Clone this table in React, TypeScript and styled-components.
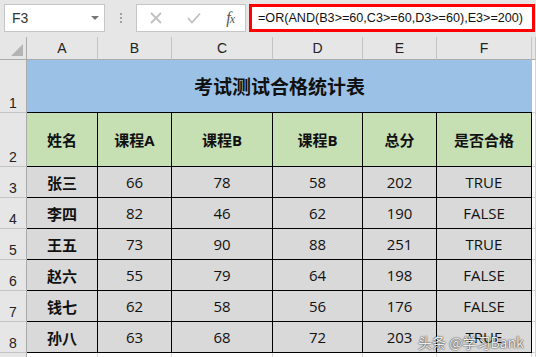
import React from 'react'
import styled, { createGlobalStyle } from 'styled-components'

const CJK = '"Open Sans", "Noto Sans CJK SC", sans-serif'

const GlobalStyle = createGlobalStyle`
  html, body {
    margin: 0;
    padding: 0;
    background: #e6e6e6;
  }
  * {
    box-sizing: border-box;
  }
`

const headers = ['姓名', '课程A', '课程B', '课程B', '总分', '是否合格']
const columns = ['A', 'B', 'C', 'D', 'E', 'F']

const rows = [
  ['张三', 66, 78, 58, 202, 'TRUE'],
  ['李四', 82, 46, 62, 190, 'FALSE'],
  ['王五', 73, 90, 88, 251, 'TRUE'],
  ['赵六', 55, 79, 64, 198, 'FALSE'],
  ['钱七', 62, 58, 56, 176, 'FALSE'],
  ['孙八', 63, 68, 72, 203, 'TRUE'],
]

export default function App() {
  return (
    <Page>
      <GlobalStyle />
      <Toolbar>
        <NameBox>
          F3
          <Caret />
        </NameBox>
        <Grip>
          <i />
          <i />
          <i />
        </Grip>
        <FnBox>
          <FnIcon viewBox="0 0 12 12">
            <path d="M1 1 L11 11 M11 1 L1 11" />
          </FnIcon>
          <FnIcon viewBox="0 0 14 12" $wide>
            <path d="M1 6 L5 10.5 L13 1.5" />
          </FnIcon>
          <Fx>
            f<small>x</small>
          </Fx>
        </FnBox>
        <FormulaBox>=OR(AND(B3&gt;=60,C3&gt;=60,D3&gt;=60),E3&gt;=200)</FormulaBox>
      </Toolbar>

      <Sheet>
        <Corner>
          <CornerMark />
        </Corner>
        {columns.map((c) => (
          <ColHead key={c}>{c}</ColHead>
        ))}
        <ColHead />

        <RowHead>1</RowHead>
        <TitleCell>考试测试合格统计表</TitleCell>
        <Spare />

        <RowHead>2</RowHead>
        {headers.map((h, i) => (
          <HeadCell key={i}>{h}</HeadCell>
        ))}
        <Spare />

        {rows.map((r, ri) => (
          <React.Fragment key={ri}>
            <RowHead>{ri + 3}</RowHead>
            {r.map((v, ci) => (
              <DataCell key={ci} $bold={ci === 0}>
                {v}
              </DataCell>
            ))}
            <Spare />
          </React.Fragment>
        ))}

        <RowHead $open />
        {columns.map((c) => (
          <Spare key={c} $open />
        ))}
        <Spare $open />
      </Sheet>

      {/* watermark sits over the last row, as in the screenshot */}
      <Watermark>头条 @学习Bank</Watermark>
    </Page>
  )
}

const Page = styled.div`
  position: relative;
  width: 536px;
  height: 357px;
  overflow: hidden;
  background: #e6e6e6;
  font-family: "Liberation Sans", Arial, sans-serif;
`

const Toolbar = styled.div`
  display: flex;
  align-items: flex-start;
  height: 37px;
  padding: 4px 1px 0 4px;
  background: #e6e6e6;
`

const NameBox = styled.div`
  position: relative;
  display: flex;
  align-items: center;
  width: 101px;
  height: 28px;
  padding-left: 7px;
  background: #fff;
  border: 1px solid #c6c6c6;
  font-size: 14px;
  color: #333;
`

const Caret = styled.span`
  position: absolute;
  right: 5px;
  top: 11px;
  border-left: 4px solid transparent;
  border-right: 4px solid transparent;
  border-top: 4px solid #777;
`

const Grip = styled.div`
  display: flex;
  flex-direction: column;
  gap: 2px;
  width: 31px;
  padding: 9px 0 0 15px;

  i {
    display: block;
    width: 2px;
    height: 2px;
    background: #a0a0a0;
  }
`

const FnBox = styled.div`
  display: flex;
  align-items: center;
  justify-content: space-between;
  width: 110px;
  height: 28px;
  padding: 0 11px 0 13px;
  background: #fff;
  border: 1px solid #c6c6c6;
`

const FnIcon = styled.svg<{ $wide?: boolean }>`
  width: ${(p) => (p.$wide ? 14 : 12)}px;
  height: 12px;
  fill: none;
  stroke: #c0c0c0;
  stroke-width: 1.8;
`

const Fx = styled.span`
  font-family: "Liberation Serif", serif;
  font-style: italic;
  font-size: 16px;
  color: #555;
  letter-spacing: -1px;

  small {
    font-size: 12px;
  }
`

const FormulaBox = styled.div`
  display: flex;
  align-items: center;
  flex: 1;
  height: 28px;
  margin-left: 3px;
  padding-left: 6px;
  background: #fff;
  border: 3px solid #ff0000;
  font-size: 12.6px;
  color: #111;
  white-space: nowrap;
`

const Sheet = styled.div`
  display: grid;
  grid-template-columns: 27px 71px 74px 101px 90px 74px 95px 1fr;
  grid-template-rows: 23px 53px 54px repeat(6, 31px) 1fr;
  height: 320px;
  background: #fff;
`

const Corner = styled.div`
  position: relative;
  background: #e6e6e6;
  border-right: 1px solid #ababab;
  border-bottom: 1px solid #ababab;
`

const CornerMark = styled.span`
  position: absolute;
  right: 3px;
  bottom: 3px;
  border-left: 12px solid transparent;
  border-bottom: 12px solid #b4b4b4;
`

const ColHead = styled.div`
  display: flex;
  align-items: center;
  justify-content: center;
  background: #e6e6e6;
  border-right: 1px solid #c4c4c4;
  border-bottom: 1px solid #ababab;
  font-size: 14px;
  color: #222;
`

const RowHead = styled.div<{ $open?: boolean }>`
  display: flex;
  align-items: flex-end;
  justify-content: center;
  padding-bottom: 1px;
  background: #e6e6e6;
  border-right: 1px solid #ababab;
  border-bottom: ${(p) => (p.$open ? 'none' : '1px solid #c4c4c4')};
  font-size: 14px;
  line-height: 15px;
  color: #222;
`

const TitleCell = styled.div`
  grid-column: span 6;
  display: flex;
  align-items: center;
  justify-content: center;
  background: #9bc2e6;
  border-bottom: 1px solid #000;
  font-family: ${CJK};
  font-weight: 700;
  font-size: 19px;
  color: #111;
`

const HeadCell = styled.div`
  display: flex;
  align-items: center;
  justify-content: center;
  background: #c6e0b4;
  border-right: 1px solid #000;
  border-bottom: 1px solid #000;
  font-family: ${CJK};
  font-weight: 700;
  font-size: 15px;
  color: #111;
`

const DataCell = styled.div<{ $bold?: boolean }>`
  display: flex;
  align-items: center;
  justify-content: center;
  background: #d9d9d9;
  border-right: 1px solid #000;
  border-bottom: 1px solid #000;
  font-family: ${CJK};
  font-weight: ${(p) => (p.$bold ? 700 : 400)};
  font-size: 15px;
  color: #111;
`

const Spare = styled.div<{ $open?: boolean }>`
  background: #fff;
  border-right: 1px solid #d4d4d4;
  border-bottom: ${(p) => (p.$open ? 'none' : '1px solid #d4d4d4')};
`

const Watermark = styled.div`
  position: absolute;
  left: 418px;
  top: 332px;
  font-family: "Noto Sans CJK SC", sans-serif;
  font-size: 14px;
  color: rgba(255, 255, 255, 0.92);
  text-shadow: 0 0 2px rgba(0, 0, 0, 0.75), 0 0 1px rgba(0, 0, 0, 0.6);
  white-space: nowrap;
`
